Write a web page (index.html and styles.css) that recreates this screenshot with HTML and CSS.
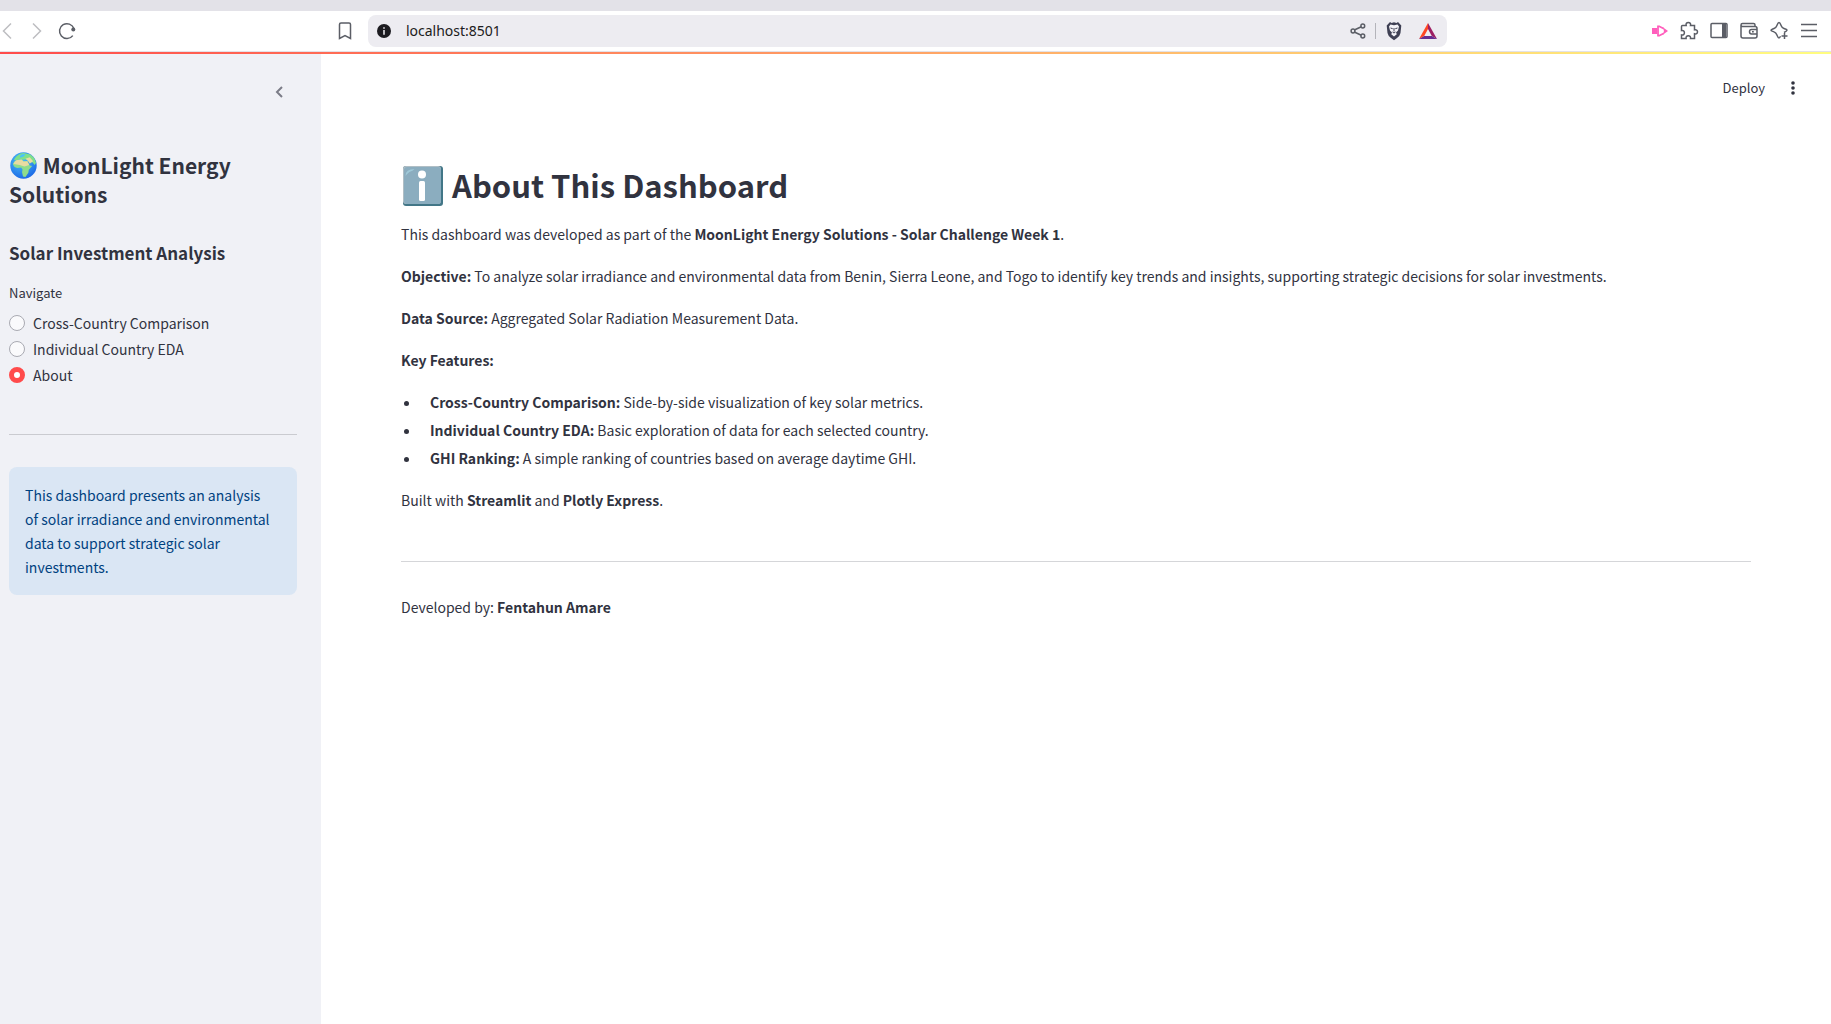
FILE: index.html
```html
<!DOCTYPE html>
<html lang="en">
<head>
<meta charset="utf-8">
<meta name="viewport" content="width=device-width, initial-scale=1">
<title>MoonLight Energy Solutions</title>
<link rel="stylesheet" href="styles.css">
</head>
<body>
<div class="browser">
  <div class="tab-strip"></div>
  <div class="toolbar">
    <div class="nav-buttons">
      <button class="icon-button faded" aria-label="Back"><svg width="20" height="20" viewBox="0 0 20 20"><path d="M11 2.500 3.500 10l7.500 7.500"/></svg></button>
      <button class="icon-button faded" aria-label="Forward"><svg width="20" height="20" viewBox="0 0 20 20"><path d="m5 2.500 7.500 7.500L5 17.500"/></svg></button>
      <button class="icon-button" aria-label="Reload"><svg width="20" height="20" viewBox="0 0 20 20"><path d="M16.800 14.600A7.400 7.400 0 1 1 17.900 7.600"/><circle class="solid" cx="17.300" cy="8.600" r="2"/></svg></button>
    </div>
    <div class="address">
      <button class="icon-button" aria-label="Bookmark"><svg width="20" height="20" viewBox="0 0 20 20"><path d="M4.500 3.500q0-1.500 1.500-1.500h8q1.500 0 1.500 1.500V17.500L10 14.500 4.500 17.500z"/></svg></button>
      <div class="url-box">
        <svg width="14" height="14" viewBox="0 0 14 14"><circle cx="7" cy="7" r="7" fill="#1c1b20" stroke="none"/><path d="M7 3.200v1.500M7 6v4.800" stroke="#e4e3e8" stroke-width="1.600"/></svg>
        <input class="url" type="text" aria-label="Address" value="localhost:8501">
        <button class="icon-button" aria-label="Share"><svg width="16" height="16" viewBox="0 0 16 16"><path d="m4.300 7 7-3.300M4.300 9l7 3.300"/><circle cx="3" cy="8" r="1.900"/><circle cx="12.800" cy="3" r="1.900"/><circle cx="12.800" cy="13" r="1.900"/></svg></button>
        <span class="divider"></span>
        <button class="icon-button" aria-label="Shields"><svg width="18" height="20" viewBox="0 0 18 20"><path d="m5 1 1.500 1 2.500-.8 2.500.8L13 1l3.300 3.500-.8 7.500q-.8 3.500-3.500 5L9 19.300 6 17q-2.700-1.500-3.500-5l-.8-7.500z" fill="#3f4054" stroke="none"/><path d="M5.500 3.500 9 4.300l3.500-.8 1.500 2-1 4-2 2 .8 1.700L9 15.500l-2.800-2.300.8-1.700-2-2-1-4z" fill="#f4f3f8" stroke="none"/><path d="m5.500 7 2.200.7M12.500 7l-2.200.7M9 7v3.500M7.500 11 9 12l1.500-1" stroke="#3f4054" stroke-width="1"/></svg></button>
        <button class="icon-button rewards" aria-label="Rewards"><svg width="18" height="16" viewBox="0 0 18 16"><path d="M9 0 0 16l5.200-3L9 6z" fill="#ff4724" stroke="none"/><path d="m9 0 9 16-5.200-3L9 6z" fill="#9e1f63" stroke="none"/><path d="M0 16h18l-5.200-3H5.200z" fill="#662d91" stroke="none"/></svg></button>
      </div>
    </div>
    <div class="tools">
      <button class="icon-button" aria-label="Screen recorder"><svg width="18" height="20" viewBox="0 0 18 20"><path d="M1 7h5v6H1z" fill="#ff5ebc" stroke="none"/><path d="M7 4.500v11M7.500 5l5 2.500M7.500 15l5-2.500" stroke="#ff5ebc" stroke-width="1.800"/><path d="m11.500 6 5.500 4-5.500 4 1.500-4z" fill="#ff5ebc" stroke="none"/></svg></button>
      <button class="icon-button" aria-label="Extensions"><svg width="20" height="20" viewBox="0 0 20 20"><path d="M3.500 4.500h3.700C6.700 2.600 7.600 1.500 9.300 1.500s2.700 1.100 2.200 3h4v4.300c1.800-.5 3 .4 3 2s-1.200 2.500-3 2v4.700h-4c.3-1.700-.5-2.700-2.200-2.700s-2.500 1-2.200 2.700H2.500V14c1.700.3 2.900-.5 2.900-2.200s-1.200-2.600-2.900-2.200V5.500q0-1 1-1z"/></svg></button>
      <button class="icon-button" aria-label="Sidebar"><svg width="20" height="20" viewBox="0 0 20 20"><rect x="2" y="2.500" width="16" height="14" rx="1"/><path class="solid" d="M13 2.500h4v14h-4z"/></svg></button>
      <button class="icon-button" aria-label="Wallet"><svg width="20" height="20" viewBox="0 0 20 20"><path d="M16 5.500V4q0-1.500-1.500-1.500h-11Q2 2.500 2 4v11q0 2 2 2h12q2 0 2-2V7.500q0-2-2-2H3.500Q2 5.500 2 4M18 8.500h-5.500q-2 0-2 2.200t2 2.200H18M13 10.700h1.800"/></svg></button>
      <button class="icon-button" aria-label="Assistant"><svg width="20" height="20" viewBox="0 0 20 20"><path d="M15 11.500C17 10.500 18 10 18 9.200s-1.500-1-3-1.700q-2-.8-2.800-2.800C11.500 3 11 1.500 10 1.500S8.500 3 7.800 4.700Q7 6.700 5 7.500C3.500 8.200 2 8.500 2 9.200s1.500 1 3 1.700q2 .8 2.800 2.800c.7 1.700 1.200 3.200 2.200 3.200.7 0 1-.5 1.500-1.700M15.500 12v6M12.500 15h6"/></svg></button>
      <button class="icon-button" aria-label="Menu"><svg width="20" height="20" viewBox="0 0 20 20"><path d="M2 3.500h16M2 9.500h16M2 15.500h16"/></svg></button>
    </div>
  </div>
</div>
<div class="decoration"></div>
<div class="app">
  <aside class="sidebar">
    <div class="sidebar-header">
      <button class="icon-button" aria-label="Collapse sidebar"><svg width="12" height="14" viewBox="0 0 12 14"><path d="M9 2 4 7l5 5" stroke="#7b7c87" stroke-width="2"/></svg></button>
    </div>
    <h2 class="brand"><svg class="globe" width="27" height="27" viewBox="0 0 28 28" role="img" aria-label="Globe"><defs><radialGradient id="sea" cx=".4" cy=".3" r=".75"><stop offset="0" stop-color="#4cc3f8"/><stop offset="1" stop-color="#1b66e6"/></radialGradient></defs><circle cx="14" cy="14" r="13.700" fill="url(#sea)"/><path d="M4 8Q8 1.500 14 1l7 1.500q5 3 6 9l-1.500 2-2-2.500-3.500-1-3-2.500-4 .5-3-1-3 1.500z" fill="#7fe08a"/><path d="M3 13q1-4.500 5-5l4-.5 2 2 4-.2 2.500 4.700 2.500.5-3.500 4-.5 3-3 4.500-2.500-.5-1-4.500.5-3-1.500-2-4 .5Q4 16 3 13z" fill="#8fdc8c"/><path d="M3.500 12.500Q5 8.500 8 8.200l4-.4 2 2 4-.2 2 4-5 1.500-5-1.500zM16 7l4.500-1.500 3.500 4-3.500 2.500-2-3z" fill="#e8dba3"/><path d="M11 3q3-1.500 5-.5L14 5l-4 1z" fill="#4cc3f8"/></svg> MoonLight Energy Solutions</h2>
    <h3 class="subtitle">Solar Investment Analysis</h3>
    <fieldset class="nav">
      <legend>Navigate</legend>
      <label><input type="radio" name="page">Cross-Country Comparison</label>
      <label><input type="radio" name="page">Individual Country EDA</label>
      <label><input type="radio" name="page" checked>About</label>
    </fieldset>
    <hr>
    <div class="info">This dashboard presents an analysis of solar irradiance and environmental data to support strategic solar investments.</div>
  </aside>
  <main class="main">
    <header class="app-header">
      <button class="deploy">Deploy</button>
      <button class="icon-button" aria-label="Main menu"><svg width="16" height="16" viewBox="0 0 16 16"><g fill="#31333f" stroke="none"><circle cx="8" cy="3" r="1.800"/><circle cx="8" cy="8" r="1.800"/><circle cx="8" cy="13" r="1.800"/></g></svg></button>
    </header>
    <article class="content">
      <h1><svg class="info-mark" width="44" height="44" viewBox="0 0 44 44" role="img" aria-label="Information"><rect x="2" y="2" width="40" height="40" rx="3" fill="#427687"/><rect x="2" y="2" width="38" height="38" rx="3" fill="#b0bec5"/><rect x="3" y="3" width="37" height="37" rx="3" fill="#8badbf"/><path d="M4.500 12q0-7 9-7-2 2-4 2.500T4.500 12" fill="#9fc9d8"/><circle cx="21" cy="10.500" r="4" fill="#fff"/><rect x="18" y="17" width="6" height="20" rx="1.500" fill="#fff"/></svg> About This Dashboard</h1>
      <p>This dashboard was developed as part of the <strong>MoonLight Energy Solutions - Solar Challenge Week 1</strong>.</p>
      <p><strong>Objective:</strong> To analyze solar irradiance and environmental data from Benin, Sierra Leone, and Togo to identify key trends and insights, supporting strategic decisions for solar investments.</p>
      <p><strong>Data Source:</strong> Aggregated Solar Radiation Measurement Data.</p>
      <p><strong>Key Features:</strong></p>
      <ul>
        <li><strong>Cross-Country Comparison:</strong> Side-by-side visualization of key solar metrics.</li>
        <li><strong>Individual Country EDA:</strong> Basic exploration of data for each selected country.</li>
        <li><strong>GHI Ranking:</strong> A simple ranking of countries based on average daytime GHI.</li>
      </ul>
      <p>Built with <strong>Streamlit</strong> and <strong>Plotly Express</strong>.</p>
      <hr>
      <p>Developed by: <strong>Fentahun Amare</strong></p>
    </article>
  </main>
</div>
</body>
</html>
```
FILE: styles.css
```css
* {
  box-sizing: border-box;
}

body {
  margin: 0;
  min-height: 100vh;
  display: flex;
  flex-direction: column;
  background: #fff;
  color: #31333f;
  font-family: "Noto Sans CJK SC", sans-serif;
  font-size: 14px;
  line-height: 26px;
}

h1, h2, h3, p, ul, fieldset, legend {
  margin: 0;
  padding: 0;
}

button {
  border: 0;
  padding: 0;
  background: none;
  color: inherit;
  font: inherit;
}

svg {
  display: block;
  flex-shrink: 0;
  fill: none;
  stroke: #5b5e66;
  stroke-width: 1.5;
}

svg .solid {
  fill: #5b5e66;
  stroke: none;
}

hr {
  width: 100%;
  height: 1px;
  border: 0;
  margin: 0;
  background: #d5d6d9;
}

/* Browser chrome */
.tab-strip {
  height: 11px;
  background: #e3e2e8;
}

.toolbar {
  height: 41px;
  padding: 4px 12px 4px 0;
  display: grid;
  grid-template-columns: 9fr 1112px 10fr;
  align-items: center;
  border-bottom: 1px solid #e3e2e8;
}

.nav-buttons,
.tools,
.address {
  display: flex;
  align-items: center;
}

.nav-buttons {
  gap: 8px;
}

.faded svg {
  stroke: #bdbec1;
}

.address {
  gap: 13px;
}

.url-box {
  flex: 1;
  height: 32px;
  padding: 0 10px 0 9px;
  display: flex;
  align-items: center;
  gap: 9px;
  border-radius: 8px;
  background: #edecf1;
}

.url {
  flex: 1;
  min-width: 0;
  height: 26px;
  border: 0;
  padding: 0 0 2px 6px;
  background: none;
  color: #1c1b20;
  font-family: "Noto Sans", sans-serif;
  font-size: 14px;
}

.divider {
  width: 1px;
  height: 16px;
  background: #b4b4ba;
}

.rewards {
  margin-left: 7px;
}

.tools {
  justify-content: flex-end;
  gap: 10px;
}

.decoration {
  height: 2px;
  background: linear-gradient(90deg, #ff4b4b, #fffd80);
}

/* App shell */
.app {
  flex: 1;
  display: flex;
}

.sidebar {
  width: 321px;
  flex-shrink: 0;
  padding: 28px 24px 24px 9px;
  background: #f0f1f6;
}

.sidebar-header {
  height: 69px;
  display: flex;
  justify-content: flex-end;
  align-items: flex-start;
  padding: 3px 12px 0 0;
}

.brand {
  font-size: 21px;
  line-height: 29px;
}

.globe,
.info-mark {
  display: inline-block;
  stroke: none;
}

.globe {
  margin: 0 1px;
  vertical-align: -5px;
}

.info-mark {
  vertical-align: -10px;
}

.subtitle {
  margin-top: 32px;
  font-size: 17px;
  line-height: 24px;
}

.nav {
  border: 0;
  min-width: 0;
  margin: 17px 0 46px;
}

.nav legend {
  margin-bottom: 6px;
  font-size: 13px;
  line-height: 22px;
}

.nav label {
  display: flex;
  align-items: center;
  gap: 8px;
}

.nav input {
  appearance: none;
  width: 16px;
  height: 16px;
  margin: 0;
  border: 1px solid #a9aab2;
  border-radius: 50%;
  background: #fafafc;
}

.nav input:checked {
  border: 5px solid #ff4b4b;
  background: #fff;
}

.info {
  margin-top: 32px;
  padding: 16px 24px 16px 16px;
  border-radius: 8px;
  background: #dae6f4;
  color: #004280;
  line-height: 24px;
}

.sidebar hr {
  background: #cacbd0;
}

.main {
  flex: 1;
  min-width: 0;
}

.app-header {
  height: 68px;
  padding: 0 30px 0 0;
  display: flex;
  justify-content: flex-end;
  align-items: center;
  gap: 20px;
}

.deploy {
  font-size: 13px;
}

.content {
  padding: 41px 80px;
  display: flex;
  flex-direction: column;
  gap: 16px;
}

.content h1 {
  margin-bottom: -3px;
  font-size: 31px;
  line-height: 44px;
}

.content ul {
  padding-left: 20px;
  display: flex;
  flex-direction: column;
  gap: 2px;
}

.content li {
  padding-left: 9px;
}

.content hr {
  margin: 32px 0 16px;
}
```
